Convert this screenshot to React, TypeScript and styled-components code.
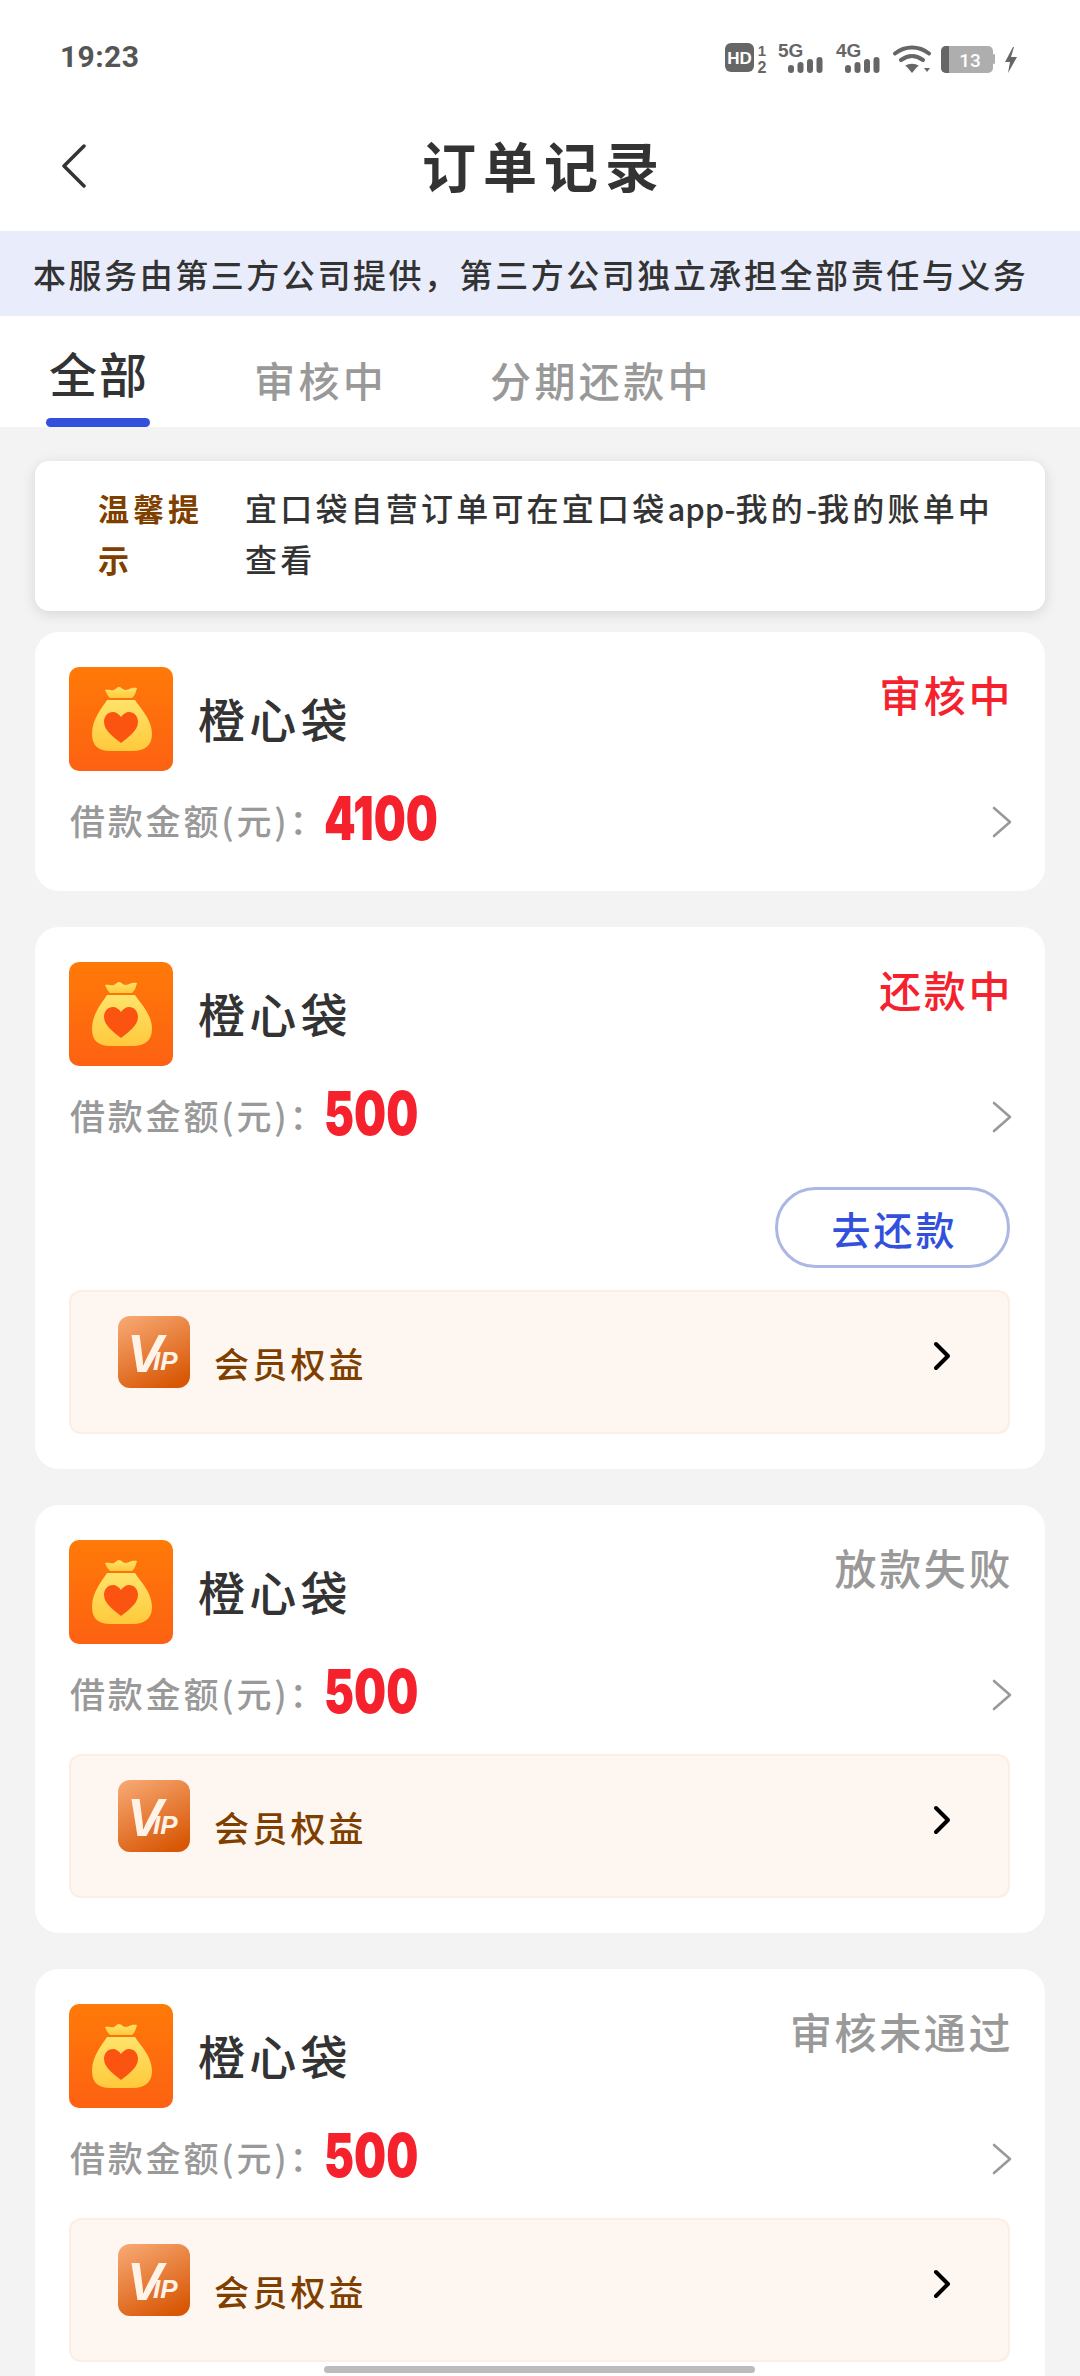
import React from "react";
import styled, { createGlobalStyle } from "styled-components";

const CJK = `"Noto Sans CJK SC", "Noto Sans", sans-serif`;

const Global = createGlobalStyle`
  html, body { margin: 0; padding: 0; background: #fff; }
  * { box-sizing: border-box; }
`;

const Page = styled.div`
  position: relative;
  width: 1080px;
  height: 2376px;
  overflow: hidden;
  background: #f3f3f3;
  font-family: ${CJK};
  color: #333;
`;

const TopArea = styled.header`
  background: #fff;
`;

const StatusBar = styled.div`
  height: 110px;
  padding: 36px 61px 0 60px;
  display: flex;
  justify-content: space-between;
  align-items: flex-start;
`;

const Time = styled.span`
  font-family: "Roboto", sans-serif;
  font-size: 30px;
  line-height: 32px;
  font-weight: 700;
  letter-spacing: 0.4px;
  color: #555;
  margin-top: 5px;
`;

const StatusIcons = styled.svg`
  display: block;
`;

const NavBar = styled.div`
  position: relative;
  height: 121px;
  display: flex;
  align-items: center;
  justify-content: center;
  padding: 0 0 12px 8px;
`;

const BackIcon = styled.svg`
  position: absolute;
  left: 60px;
  top: 34px;
`;

const Title = styled.h1`
  margin: 0;
  font-size: 54px;
  line-height: 70px;
  letter-spacing: 7px;
  font-weight: 700;
  color: #333;
`;

const Banner = styled.div`
  height: 85px;
  background: #e9edfb;
  padding-left: 33px;
  display: flex;
  align-items: center;
  font-size: 33px;
  letter-spacing: 2.55px;
  font-weight: 500;
  color: #333;
  white-space: nowrap;
`;

const Tabs = styled.nav`
  height: 111px;
  display: flex;
  align-items: flex-start;
  padding-left: 46px;
`;

const Tab = styled.div<{ $active?: boolean; $width: number }>`
  position: relative;
  width: ${(p) => p.$width}px;
  height: 111px;
  padding-top: ${(p) => (p.$active ? 26 : 33)}px;
  padding-left: ${(p) => (p.$active ? 3 : 0)}px;
  font-size: ${(p) => (p.$active ? 48 : 41)}px;
  line-height: 60px;
  letter-spacing: ${(p) => (p.$active ? 2 : 3.4)}px;
  font-weight: 500;
  color: ${(p) => (p.$active ? "#333" : "#999")};
  white-space: nowrap;
`;

const TabBar = styled.span`
  position: absolute;
  left: 0;
  bottom: 0;
  width: 104px;
  height: 9px;
  border-radius: 5px;
  background: #3350dd;
`;

const Content = styled.main`
  padding: 34px 35px 0;
  display: flex;
  flex-direction: column;
`;

const Tip = styled.section`
  height: 150px;
  margin-bottom: 21px;
  padding: 21px 40px 0 63px;
  background: #fff;
  border-radius: 14px;
  box-shadow: 0 3px 14px rgba(0, 0, 0, 0.12);
  display: flex;
  font-size: 32px;
  line-height: 51px;
  letter-spacing: 3.2px;
`;

const TipLabel = styled.div`
  width: 147px;
  flex: none;
  padding-right: 30px;
  color: #7f3f00;
  font-weight: 700;
  font-size: 31px;
  letter-spacing: 4px;
`;

const TipText = styled.div`
  flex: 1;
  color: #333;
  font-weight: 500;
`;

const TipLine = styled.div`
  white-space: nowrap;
`;

const Latin = styled.span`
  letter-spacing: 0;
  font-size: 31px;
`;

const Card = styled.article`
  position: relative;
  background: #fff;
  border-radius: 24px;
  padding: 35px 35px 0 34px;
  margin-bottom: 36px;
`;

const CardHead = styled.div`
  height: 104px;
  display: flex;
  align-items: center;
`;

const AppIcon = styled.svg`
  flex: none;
  border-radius: 10px;
`;

const AppName = styled.div`
  margin-left: 25px;
  margin-top: -2px;
  font-size: 47px;
  line-height: 60px;
  letter-spacing: 4.2px;
  font-weight: 500;
  color: #333;
  flex: 1;
`;

const Status = styled.div<{ $color: string }>`
  align-self: flex-start;
  margin-top: -1px;
  font-size: 42px;
  line-height: 56px;
  letter-spacing: 2.6px;
  margin-right: -3px;
  font-weight: 500;
  color: ${(p) => p.$color};
`;

const AmountRow = styled.div`
  height: 98px;
  display: flex;
  align-items: center;
`;

const AmountLabel = styled.div`
  margin-left: 1px;
  width: 254px;
  font-size: 35px;
  line-height: 50px;
  letter-spacing: 2.8px;
  font-weight: 500;
  color: #999;
  white-space: nowrap;
`;

const Amount = styled.div`
  font-family: "Inter", sans-serif;
  font-weight: 900;
  font-size: 61px;
  line-height: 60px;
  color: #f5222d;
  transform: scaleX(0.74);
  transform-origin: left center;
  margin-top: -4px;
  flex: 1;
`;

const RowArrow = styled.svg`
  flex: none;
  margin: 4px -3px 0 0;
`;

const PayRow = styled.div`
  display: flex;
  justify-content: flex-end;
  margin-top: 23px;
  margin-bottom: 22px;
`;

const PayButton = styled.button`
  width: 235px;
  height: 81px;
  border-radius: 41px;
  border: 3px solid #abb8e3;
  background: #fff;
  font-family: ${CJK};
  font-size: 39px;
  line-height: 50px;
  letter-spacing: 3px;
  font-weight: 500;
  color: #3350dd;
  padding: 0 0 0 4px;
`;

const VipPanel = styled.div`
  height: 144px;
  margin-top: 12px;
  margin-bottom: 35px;
  padding: 24px 57px 0 47px;
  background: #fef6f0;
  border: 2px solid #fbeee3;
  border-radius: 12px;
  display: flex;
  align-items: flex-start;
`;

const VipIcon = styled.svg`
  flex: none;
`;

const VipText = styled.div`
  margin-left: 24px;
  margin-top: 22px;
  font-size: 35px;
  line-height: 50px;
  letter-spacing: 3.2px;
  font-weight: 500;
  color: #7f3f00;
  flex: 1;
`;

const VipArrow = styled.svg`
  flex: none;
  margin-top: 25px;
`;

const Spacer = styled.div`
  height: 22px;
`;

const HomeIndicator = styled.div`
  position: absolute;
  left: 324px;
  top: 2366px;
  width: 431px;
  height: 7px;
  border-radius: 4px;
  background: #bcbcbc;
`;

const Signals = () => (
  <StatusIcons width="296" height="44" viewBox="724 36 296 44">
    <rect x="726" y="43" width="29" height="29" rx="6" fill="#666" />
    <text x="740.5" y="63.5" textAnchor="middle" fontFamily="Liberation Sans" fontWeight="700" fontSize="17" fill="#fff">HD</text>
    <text x="763" y="56" textAnchor="middle" fontFamily="Liberation Sans" fontWeight="700" fontSize="15" fill="#666">1</text>
    <text x="763" y="73" textAnchor="middle" fontFamily="Liberation Sans" fontWeight="700" fontSize="16" fill="#666">2</text>
    <text x="779" y="57" fontFamily="Liberation Sans" fontWeight="700" fontSize="19" fill="#666">5G</text>
    <text x="837" y="57" fontFamily="Liberation Sans" fontWeight="700" fontSize="19" fill="#666">4G</text>
    {[789, 846].map((x0) => (
      <g key={x0} fill="#666">
        <rect x={x0} y="65" width="6" height="8" rx="3" />
        <rect x={x0 + 9.5} y="62" width="6" height="11" rx="3" />
        <rect x={x0 + 19} y="59" width="6" height="14" rx="3" />
        <rect x={x0 + 28.5} y="57" width="6" height="16" rx="3" />
      </g>
    ))}
    <g fill="none" stroke="#666" strokeWidth="4" strokeLinecap="round">
      <path d="M896 53.5c10-8 24-8 34 0" />
      <path d="M902 60c7-5 15-5 22 0" />
    </g>
    <path d="M906 66c4-3 10-3 14 0l-7 3z" fill="#666" />
    <path d="M908 67l5 6 5-6z" fill="#666" />
    <path d="M925 68h6l-3 4z" fill="#666" />
    <rect x="942" y="46" width="52" height="27" rx="5" fill="#aeaeae" />
    <path d="M947 46h3v27h-3a5 5 0 0 1-5-5V51a5 5 0 0 1 5-5z" fill="#666" />
    <rect x="994" y="54" width="2" height="10" rx="1" fill="#aeaeae" />
    <text x="971" y="67" textAnchor="middle" fontFamily="Roboto" fontSize="19" fontWeight="500" fill="#fff">13</text>
    <path d="M1014 47l-8 15h5l-2 11 9-16h-6l3-10z" fill="#666" />
  </StatusIcons>
);

const BagIcon = ({ id }: { id: string }) => (
  <AppIcon width="104" height="104" viewBox="0 0 104 104">
    <defs>
      <linearGradient id={`${id}-bg`} x1="0" y1="0" x2="0" y2="1">
        <stop offset="0" stopColor="#ff7a08" />
        <stop offset="1" stopColor="#fd6112" />
      </linearGradient>
      <linearGradient id={`${id}-bag`} x1="0" y1="0" x2="0" y2="1">
        <stop offset="0" stopColor="#ffe36a" />
        <stop offset="1" stopColor="#ffc93c" />
      </linearGradient>
    </defs>
    <rect width="104" height="104" fill={`url(#${id}-bg)`} />
    <path d="M36 23c4-1 7 1 9 0 2-1 3-3 5-3 3 0 3 3 7 3 3 0 5-3 11-2-1 4-2 7-4 9l-1 1H41l-1-1c-2-2-3-5-4-7z" fill={`url(#${id}-bag)`} />
    <path d="M38 33h28c5 8 17 19 17 34 0 12-8 17-19 17H41c-11 0-18-5-18-17 0-15 10-26 15-34z" fill={`url(#${id}-bag)`} />
    <path d="M52 76C46 71 35 64 35 55c0-6 4-10 9-10 3 0 6 2 8 5 2-3 5-5 8-5 5 0 9 4 9 10 0 9-11 16-17 21z" fill="#fb5410" />
  </AppIcon>
);

const VipBadge = ({ id }: { id: string }) => (
  <VipIcon width="72" height="72" viewBox="0 0 72 72">
    <defs>
      <linearGradient id={id} x1="0.2" y1="0" x2="0.7" y2="1">
        <stop offset="0" stopColor="#f6a56f" />
        <stop offset="1" stopColor="#d85705" />
      </linearGradient>
    </defs>
    <rect width="72" height="72" rx="12" fill={`url(#${id})`} />
    <text x="9" y="56" fontFamily="Liberation Sans" fontWeight="700" fontStyle="italic" fill="#fff3e8">
      <tspan fontSize="54">V</tspan>
      <tspan fontSize="26" dx="-10" dy="-2">IP</tspan>
    </text>
  </VipIcon>
);

type Item = {
  id: string;
  status: string;
  color: string;
  amount: string;
  pay?: boolean;
  vip?: boolean;
};

const items: Item[] = [
  { id: "a", status: "审核中", color: "#f5222d", amount: "4100" },
  { id: "b", status: "还款中", color: "#f5222d", amount: "500", pay: true, vip: true },
  { id: "c", status: "放款失败", color: "#999", amount: "500", vip: true },
  { id: "d", status: "审核未通过", color: "#999", amount: "500", vip: true },
];

const App = () => (
  <Page>
    <Global />
    <TopArea>
      <StatusBar>
        <Time>19:23</Time>
        <Signals />
      </StatusBar>
      <NavBar>
        <BackIcon width="28" height="44" viewBox="0 0 28 44">
          <path d="M24 2 4 22l20 20" fill="none" stroke="#333" strokeWidth="3.5" strokeLinecap="round" strokeLinejoin="round" />
        </BackIcon>
        <Title>订单记录</Title>
      </NavBar>
      <Banner>本服务由第三方公司提供，第三方公司独立承担全部责任与义务</Banner>
      <Tabs>
        <Tab $active $width={208}>
          全部
          <TabBar />
        </Tab>
        <Tab $width={236}>审核中</Tab>
        <Tab $width={300}>分期还款中</Tab>
      </Tabs>
    </TopArea>
    <Content>
      <Tip>
        <TipLabel>温馨提示</TipLabel>
        <TipText>
          <TipLine>
            宜口袋自营订单可在宜口袋<Latin>app-</Latin>我的<Latin>-</Latin>我的账单中
          </TipLine>
          <TipLine>查看</TipLine>
        </TipText>
      </Tip>
      {items.map((it) => (
        <Card key={it.id}>
          <CardHead>
            <BagIcon id={it.id} />
            <AppName>橙心袋</AppName>
            <Status $color={it.color}>{it.status}</Status>
          </CardHead>
          <AmountRow>
            <AmountLabel>借款金额(元)：</AmountLabel>
            <Amount>{it.amount}</Amount>
            <RowArrow width="22" height="32" viewBox="0 0 22 32">
              <path d="M3 2l16 14L3 30" fill="none" stroke="#999" strokeWidth="2.6" strokeLinecap="round" strokeLinejoin="round" />
            </RowArrow>
          </AmountRow>
          {it.pay && (
            <PayRow>
              <PayButton>去还款</PayButton>
            </PayRow>
          )}
          {it.vip ? (
            <VipPanel>
              <VipBadge id={`vip-${it.id}`} />
              <VipText>会员权益</VipText>
              <VipArrow width="18" height="30" viewBox="0 0 18 30">
                <path d="M3 3l12 12L3 27" fill="none" stroke="#000" strokeWidth="4" strokeLinecap="round" strokeLinejoin="round" />
              </VipArrow>
            </VipPanel>
          ) : (
            <Spacer />
          )}
        </Card>
      ))}
    </Content>
    <HomeIndicator />
  </Page>
);

export default App;
